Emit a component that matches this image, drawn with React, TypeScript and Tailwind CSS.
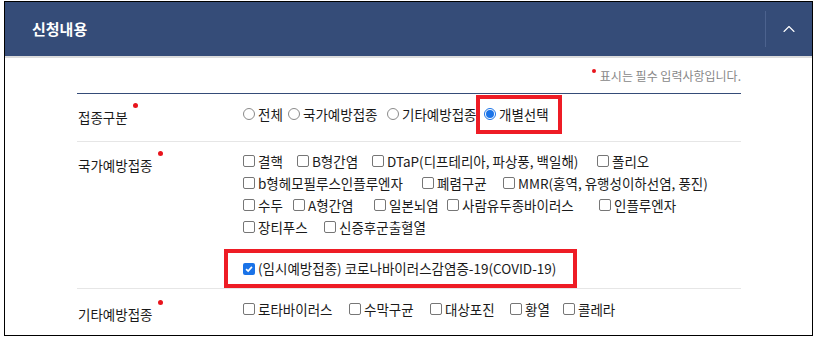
import { ChevronUp } from "lucide-react";

// width of each item = distance to the next checkbox in the reference
const national: [string, number][][] = [
  [["결핵", 54], ["B형간염", 75], ["DTaP(디프테리아, 파상풍, 백일해)", 225], ["폴리오", 0]],
  [["b형헤모필루스인플루엔자", 179], ["폐렴구균", 81], ["MMR(홍역, 유행성이하선염, 풍진)", 0]],
  [["수두", 50], ["A형간염", 81], ["일본뇌염", 73], ["사람유두종바이러스", 152], ["인플루엔자", 0]],
  [["장티푸스", 81], ["신증후군출혈열", 0]],
];

const others: [string, number][] = [
  ["로타바이러스", 106],
  ["수막구균", 81],
  ["대상포진", 80],
  ["황열", 53],
  ["콜레라", 0],
];

const RequiredDot = () => (
  <span className="ml-[5px] inline-block h-[5px] w-[5px] -translate-y-[15px] rounded-full bg-[#e8141c]" />
);

const Checkbox = ({ checked = false }: { checked?: boolean }) =>
  checked ? (
    <span className="flex h-[12px] w-[12px] shrink-0 items-center justify-center rounded-[2px] bg-[#1a73e8]">
      <svg viewBox="0 0 12 12" className="h-[10px] w-[10px]" fill="none" stroke="white" strokeWidth="2">
        <path d="M2.5 6.2 5 8.5 9.5 3.5" />
      </svg>
    </span>
  ) : (
    <span className="h-[12px] w-[12px] shrink-0 rounded-[2px] border border-[#767676] bg-white" />
  );

const Radio = ({ checked = false }: { checked?: boolean }) =>
  checked ? (
    <span className="flex h-[12px] w-[12px] shrink-0 items-center justify-center rounded-full border border-[#1a73e8] bg-white">
      <span className="h-[8px] w-[8px] rounded-full bg-[#1a73e8]" />
    </span>
  ) : (
    <span className="h-[12px] w-[12px] shrink-0 rounded-full border border-[#8a8a8a] bg-white" />
  );

const Check = ({ label, width }: { label: string; width: number }) => (
  <label
    className="flex shrink-0 items-center gap-[3px] whitespace-nowrap"
    style={width ? { width } : undefined}
  >
    <Checkbox />
    <span>{label}</span>
  </label>
);

export default function App() {
  return (
    <div
      className="h-[344px] w-[820px] overflow-hidden bg-white pl-[4px] pt-[1px] text-[13.5px] text-[#1a1a1a]"
      style={{ fontFamily: '"Noto Sans CJK KR", "Noto Sans", sans-serif' }}
    >
      <div className="h-[335px] w-[809px] border border-black">
        {/* Header */}
        <div className="flex h-[54px] items-center bg-[#354c78] pl-[27px]">
          <h2 className="flex-1 text-[15px] font-bold text-white">신청내용</h2>
          <div className="h-[36px] w-px bg-[#4c628e]" />
          <div className="flex w-[46px] items-center justify-center">
            <ChevronUp className="h-[20px] w-[20px] text-white" strokeWidth={1.3} />
          </div>
        </div>
        <div className="h-[2px] bg-[#dcdcdc]" />

        {/* Body */}
        <div className="ml-[72px] w-[664px]">
          <div className="flex h-[35px] items-center justify-end text-[12px] text-[#888]">
            <span className="mr-[4px] h-[4px] w-[4px] -translate-y-[5px] rounded-full bg-[#e8141c]" />
            표시는 필수 입력사항입니다.
          </div>
          <div className="h-px bg-[#354c78]" />

          {/* 접종구분 */}
          <div className="flex h-[48px] border-b border-[#e6e6e6]">
            <div className="w-[166px] pl-px pt-[13px]">
              접종구분
              <RequiredDot />
            </div>
            <div className="flex h-[40px] items-center">
              <label className="flex w-[45px] items-center gap-[3px]">
                <Radio />
                <span>전체</span>
              </label>
              <label className="flex w-[99px] items-center gap-[3px]">
                <Radio />
                <span>국가예방접종</span>
              </label>
              <label className="flex w-[97px] items-center gap-[3px] whitespace-nowrap">
                <Radio />
                <span>기타예방접종</span>
              </label>
              <label className="relative flex h-[20px] items-center gap-[3px]">
                <Radio checked />
                <span>개별선택</span>
                <span className="absolute -bottom-[10px] -left-[8px] -top-[9px] w-[86px] border-4 border-[#ee1c25]" />
              </label>
            </div>
          </div>

          {/* 국가예방접종 */}
          <div className="flex h-[147px] border-b border-[#e6e6e6]">
            <div className="w-[166px] pl-px pt-[13px]">
              국가예방접종
              <RequiredDot />
            </div>
            <div className="pt-[8px]">
              {national.map((line, i) => (
                <div key={i} className="flex h-[22px] items-center">
                  {line.map(([item, w]) => (
                    <Check key={item} label={item} width={w} />
                  ))}
                </div>
              ))}
              <div className="ml-[-19px] mt-[11px] flex h-[39px] w-[353px] items-center gap-[3px] border-4 border-[#ee1c25] pl-[15px] whitespace-nowrap">
                <Checkbox checked />
                <span>(임시예방접종) 코로나바이러스감염증-19(COVID-19)</span>
              </div>
            </div>
          </div>

          {/* 기타예방접종 */}
          <div className="flex">
            <div className="w-[166px] pl-px pt-[15px]">
              기타예방접종
              <RequiredDot />
            </div>
            <div className="mt-[9px] flex h-[22px] items-center">
              {others.map(([item, w]) => (
                <Check key={item} label={item} width={w} />
              ))}
            </div>
          </div>
        </div>
      </div>
    </div>
  );
}
